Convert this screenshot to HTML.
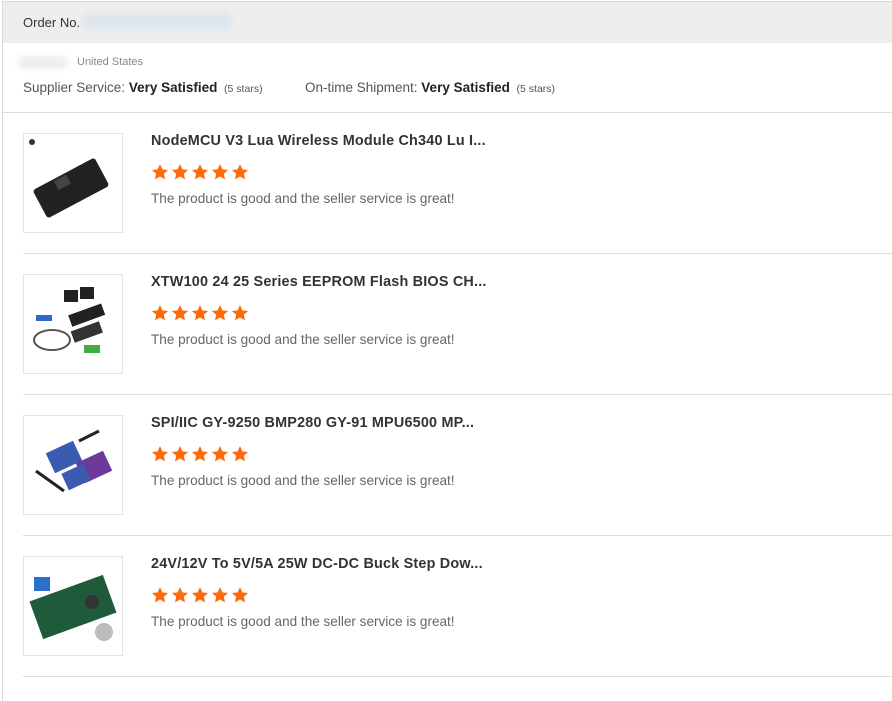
<!DOCTYPE html>
<html><head><meta charset="utf-8"><style>
*{margin:0;padding:0;box-sizing:border-box}
body{width:892px;height:677px;background:#fff;font-family:"Liberation Sans",Arial,sans-serif;position:relative;overflow:hidden}
.frame{position:absolute;left:2px;top:1px;width:900px;height:700px;border-left:1px solid #d9d9d9;border-top:1px solid #d9d9d9}
.hdr{position:absolute;left:3px;top:2px;width:889px;height:41px;background:#eeeeee}
.abs{position:absolute;white-space:nowrap}
.blur{position:absolute;background:#dde6ee;border-radius:8px;filter:blur(3px)}
.sep{position:absolute;height:1px;background:#dcdcdc}
.img{position:absolute;left:23px;width:100px;height:100px;border:1px solid #e3e3e3;background:#fff;overflow:hidden}
.title{position:absolute;left:151px;font-size:15px;color:#333;font-weight:bold;letter-spacing:0.2px;transform:scaleX(0.96);transform-origin:left;white-space:nowrap}
.stars{position:absolute;left:151px;width:100px;height:18px}
.txt{position:absolute;left:151px;font-size:14px;color:#666;transform:scaleX(0.968);transform-origin:left;white-space:nowrap}
</style></head><body>
<svg width="0" height="0" style="position:absolute"><defs><symbol id="st" viewBox="0 0 24 24"><path d="M12 1.5l3.2 7 7.6.8-5.7 5.1 1.6 7.5L12 18l-6.7 3.9 1.6-7.5L1.2 9.3l7.6-.8z" fill="#ff6a0a"/></symbol></defs></svg>
<div class="frame"></div>
<div class="hdr"></div>
<div class="abs" style="left:23px;top:15px;font-size:13px;color:#333">Order No.</div>
<div class="blur" style="left:82px;top:13px;width:150px;height:17px"></div>
<div class="blur" style="left:18px;top:56px;width:50px;height:13px;background:#eee"></div>
<div class="abs" style="left:77px;top:56px;font-size:11px;color:#888">United States</div>
<div class="abs" style="left:23px;top:80px;font-size:13.5px;color:#555">Supplier Service: <b style="color:#222">Very Satisfied</b> <span style="font-size:10.5px;color:#555">&nbsp;(5 stars)</span></div>
<div class="abs" style="left:305px;top:80px;font-size:13.5px;color:#555">On-time Shipment: <b style="color:#222">Very Satisfied</b> <span style="font-size:10.5px;color:#555">&nbsp;(5 stars)</span></div>
<div class="sep" style="left:3px;top:112px;width:889px"></div>

<div class="img" style="top:133px"><svg width="100" height="100"><rect x="12" y="38" width="70" height="32" rx="3" fill="#222" transform="rotate(-28 47 54)"/><rect x="35" y="40" width="14" height="10" fill="#444" transform="rotate(-28 47 54)"/><circle cx="8" cy="8" r="3" fill="#333"/></svg></div>
<div class="title" style="top:132px">NodeMCU V3 Lua Wireless Module Ch340 Lu I...</div>
<svg class="stars" style="top:163px"><use href="#st" x="0" width="18" height="18"/><use href="#st" x="20" width="18" height="18"/><use href="#st" x="40" width="18" height="18"/><use href="#st" x="60" width="18" height="18"/><use href="#st" x="80" width="18" height="18"/></svg>
<div class="txt" style="top:190px">The product is good and the seller service is great!</div>
<div class="sep" style="left:23px;top:253px;width:869px"></div>

<div class="img" style="top:274px"><svg width="100" height="100"><rect x="40" y="15" width="14" height="12" fill="#222"/><rect x="56" y="12" width="14" height="12" fill="#222"/><rect x="45" y="35" width="35" height="12" fill="#222" transform="rotate(-20 60 40)"/><rect x="48" y="52" width="30" height="12" fill="#333" transform="rotate(-20 60 58)"/><rect x="12" y="40" width="16" height="6" fill="#36c"/><ellipse cx="28" cy="65" rx="18" ry="10" fill="none" stroke="#555" stroke-width="2"/><rect x="60" y="70" width="16" height="8" fill="#4a4"/></svg></div>
<div class="title" style="top:273px">XTW100 24 25 Series EEPROM Flash BIOS CH...</div>
<svg class="stars" style="top:304px"><use href="#st" x="0" width="18" height="18"/><use href="#st" x="20" width="18" height="18"/><use href="#st" x="40" width="18" height="18"/><use href="#st" x="60" width="18" height="18"/><use href="#st" x="80" width="18" height="18"/></svg>
<div class="txt" style="top:331px">The product is good and the seller service is great!</div>
<div class="sep" style="left:23px;top:394px;width:869px"></div>

<div class="img" style="top:415px"><svg width="100" height="100"><rect x="25" y="30" width="30" height="22" fill="#3a5bb0" transform="rotate(-25 40 41)"/><rect x="55" y="40" width="30" height="22" fill="#6b3a9a" transform="rotate(-25 70 51)"/><rect x="40" y="52" width="24" height="18" fill="#3a5bb0" transform="rotate(-25 52 61)"/><line x1="12" y1="55" x2="40" y2="75" stroke="#222" stroke-width="3"/><line x1="55" y1="25" x2="75" y2="15" stroke="#222" stroke-width="3"/></svg></div>
<div class="title" style="top:414px">SPI/IIC GY-9250 BMP280 GY-91 MPU6500 MP...</div>
<svg class="stars" style="top:445px"><use href="#st" x="0" width="18" height="18"/><use href="#st" x="20" width="18" height="18"/><use href="#st" x="40" width="18" height="18"/><use href="#st" x="60" width="18" height="18"/><use href="#st" x="80" width="18" height="18"/></svg>
<div class="txt" style="top:472px">The product is good and the seller service is great!</div>
<div class="sep" style="left:23px;top:535px;width:869px"></div>

<div class="img" style="top:556px"><svg width="100" height="100"><rect x="10" y="30" width="78" height="40" fill="#1f5a3a" transform="rotate(-20 49 50)"/><rect x="10" y="20" width="16" height="14" fill="#2a6fd0"/><circle cx="80" cy="75" r="9" fill="#bbb"/><circle cx="68" cy="45" r="7" fill="#333"/></svg></div>
<div class="title" style="top:555px">24V/12V To 5V/5A 25W DC-DC Buck Step Dow...</div>
<svg class="stars" style="top:586px"><use href="#st" x="0" width="18" height="18"/><use href="#st" x="20" width="18" height="18"/><use href="#st" x="40" width="18" height="18"/><use href="#st" x="60" width="18" height="18"/><use href="#st" x="80" width="18" height="18"/></svg>
<div class="txt" style="top:613px">The product is good and the seller service is great!</div>
<div class="sep" style="left:23px;top:676px;width:869px"></div>
</body></html>
